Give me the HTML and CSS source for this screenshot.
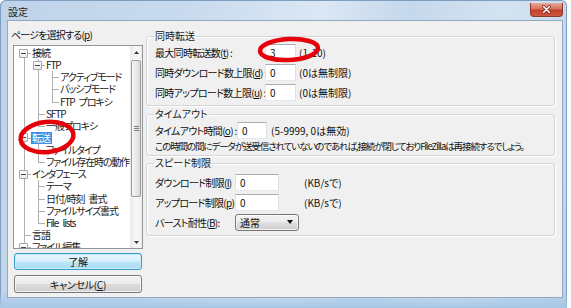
FILE: index.html
```html
<!DOCTYPE html>
<html lang="ja">
<head>
<meta charset="utf-8">
<title>設定</title>
<link rel="stylesheet" href="styles.css">
</head>
<body>
<div class="win">
  <div class="titlebar">
    <span class="title">設定</span>
    <span class="close"><svg width="11" height="9" viewBox="0 0 11 9"><path d="M2.5 1.5 L8.5 7.5 M8.5 1.5 L2.5 7.5" stroke="#7a2418" stroke-width="3" stroke-linecap="round"/><path d="M2.5 1.5 L8.5 7.5 M8.5 1.5 L2.5 7.5" stroke="#fff" stroke-width="1.5" stroke-linecap="round"/></svg></span>
  </div>
  <div class="frame">
    <div class="client">
      <div class="left">
        <div class="lbl">ページを選択する(<u>p</u>)</div>
        <div class="treebox">
          <div class="tree">
            <div class="r"><i class="c f"><b class="x"></b></i><span class="t">接続</span></div>
            <div class="r"><i class="c v"></i><i class="c tee"><b class="x"></b></i><span class="t">FTP</span></div>
            <div class="r"><i class="c v"></i><i class="c v"></i><i class="c tee"></i><span class="t">アクティブモード</span></div>
            <div class="r"><i class="c v"></i><i class="c v"></i><i class="c tee"></i><span class="t">パッシブモード</span></div>
            <div class="r"><i class="c v"></i><i class="c v"></i><i class="c l"></i><span class="t">FTP プロキシ</span></div>
            <div class="r"><i class="c v"></i><i class="c tee"></i><span class="t">SFTP</span></div>
            <div class="r"><i class="c v"></i><i class="c l"></i><span class="t">一般プロキシ</span></div>
            <div class="r"><i class="c tee"><b class="x"></b></i><span class="t sel">転送</span></div>
            <div class="r"><i class="c v"></i><i class="c tee"></i><span class="t">ファイルタイプ</span></div>
            <div class="r"><i class="c v"></i><i class="c l"></i><span class="t">ファイル存在時の動作</span></div>
            <div class="r"><i class="c tee"><b class="x"></b></i><span class="t">インタフェース</span></div>
            <div class="r"><i class="c v"></i><i class="c tee"></i><span class="t">テーマ</span></div>
            <div class="r"><i class="c v"></i><i class="c tee"></i><span class="t">日付/時刻 書式</span></div>
            <div class="r"><i class="c v"></i><i class="c tee"></i><span class="t">ファイルサイズ書式</span></div>
            <div class="r"><i class="c v"></i><i class="c l"></i><span class="t">File lists</span></div>
            <div class="r"><i class="c tee"></i><span class="t">言語</span></div>
            <div class="r"><i class="c tee"><b class="x"></b></i><span class="t">ファイル編集</span></div>
          </div>
          <div class="vs">
            <div class="arr"><svg width="5" height="3" viewBox="0 0 5 3"><path d="M0 3 L2.5 0 L5 3 Z" fill="#3a3a3a"/></svg></div>
            <div class="thumb"><span class="grip"></span></div>
            <div class="track"></div>
            <div class="arr"><svg width="5" height="3" viewBox="0 0 5 3"><path d="M0 0 L2.5 3 L5 0 Z" fill="#3a3a3a"/></svg></div>
          </div>
        </div>
        <button class="btn def" type="button">了解</button>
        <button class="btn" type="button">キャンセル(<u>C</u>)</button>
      </div>
      <div class="right">
        <fieldset class="grp g1">
          <legend>同時転送</legend>
          <div class="row"><span class="lab w1">最大同時転送数(<u>t</u>) :</span><input class="inp n1" type="text" value="3" readonly><span class="hint">(1-10)</span></div>
          <div class="row"><span class="lab w1">同時ダウンロード数上限(<u>d</u>) :</span><input class="inp n1" type="text" value="0" readonly><span class="hint">(0は無制限)</span></div>
          <div class="row"><span class="lab w1">同時アップロード数上限(<u>u</u>) :</span><input class="inp n1" type="text" value="0" readonly><span class="hint">(0は無制限)</span></div>
        </fieldset>
        <fieldset class="grp g2">
          <legend>タイムアウト</legend>
          <div class="row"><span class="lab w2">タイムアウト時間(<u>o</u>) :</span><input class="inp n2" type="text" value="0" readonly><span class="hint h2">(5-9999, 0は無効)</span></div>
          <div class="note">この時間の間にデータが送受信されていないのであれば,接続が閉じておりFileZillaは再接続するでしょう。</div>
        </fieldset>
        <fieldset class="grp g3">
          <legend>スピード制限</legend>
          <div class="row"><span class="lab w3">ダウンロード制限(<u>l</u>)</span><input class="inp n3" type="text" value="0" readonly><span class="hint h3">(KB/sで)</span></div>
          <div class="row"><span class="lab w3">アップロード制限(<u>p</u>):</span><input class="inp n3" type="text" value="0" readonly><span class="hint h3">(KB/sで)</span></div>
          <div class="row"><span class="lab w3">バースト耐性(<u>B</u>):</span><span class="combo"><span class="cv">通常</span><svg width="6" height="4" viewBox="0 0 6 4"><path d="M0 0 L6 0 L3 4 Z" fill="#111"/></svg></span></div>
        </fieldset>
      </div>
    </div>
  </div>
  <svg class="marks" width="571" height="308" viewBox="0 0 571 308">
    <ellipse cx="289" cy="49.5" rx="29" ry="10.5" transform="rotate(-3 289 49.5)" fill="none" stroke="#e5000a" stroke-width="4.5"/>
    <ellipse cx="47" cy="137" rx="26.5" ry="15" transform="rotate(-6 47 137)" fill="none" stroke="#e5000a" stroke-width="4.5"/>
  </svg>
</div>
</body>
</html>
```

FILE: styles.css
```css
* { box-sizing: border-box; }
html, body { margin: 0; padding: 0; }
body {
  width: 571px;
  height: 308px;
  overflow: hidden;
  background: #fbfcfd;
  font-family: "Noto Sans CJK JP", "Noto Sans", sans-serif;
  font-size: 10px;
  font-feature-settings: "palt";
  color: #111;
}
u { text-decoration: underline; text-underline-offset: 1px; }

.win {
  position: relative;
  width: 567px;
  height: 308px;
  display: flex;
  flex-direction: column;
  background:
    linear-gradient(100deg, #bed3ea 0%, #c8daee 30%, #dbe7f4 52%, #c5d8ec 66%, #d4e3f2 82%, #bcd1e9 100%);
  box-shadow: inset 0 0 0 1px #7f9dbd;
  border-radius: 6px 6px 0 0;
}

.titlebar {
  height: 20px;
  display: flex;
  align-items: flex-start;
  padding-left: 8px;
}
.title {
  margin-top: 6px;
  line-height: 12px;
  font-size: 10px;
  color: #1b1b1b;
}
.close {
  margin-left: auto;
  margin-right: 4px;
  margin-top: 3px;
  width: 33px;
  height: 14px;
  border: 1px solid #8a3a2c;
  border-top: none;
  border-radius: 0 0 4px 4px;
  background: linear-gradient(#e9aa9c 0%, #d8705d 45%, #c33f2b 55%, #d0563f 100%);
  display: flex;
  align-items: center;
  justify-content: center;
}

.frame {
  flex: 1;
  display: flex;
  padding: 0 4px 10px 7px;
  background: linear-gradient(to bottom, transparent 0, transparent 270px, #a7c7e6 288px, #6ea6d8 100%);
}
.client {
  flex: 1;
  display: flex;
  border: 1px solid #93a9c0;
  background: #f0f0f0;
  padding-left: 5px;
}

/* left column */
.left {
  width: 130px;
  padding-top: 8px;
  display: flex;
  flex-direction: column;
}
.lbl {
  height: 12px;
  line-height: 12px;
  margin-left: -2px;
  white-space: nowrap;
  letter-spacing: -0.8px;
}
.treebox {
  margin-top: 4px;
  height: 204px;
  border: 1px solid #8f959c;
  background: #fff;
  display: flex;
}
.tree {
  flex: 1;
  overflow: hidden;
  padding: 1px 0 0 3px;
  letter-spacing: -1.1px;
  word-spacing: 3px;
}
.r {
  height: 12.13px;
  display: flex;
  align-items: stretch;
  white-space: nowrap;
  line-height: 12.13px;
}
.c {
  flex: none;
  width: 14px;
  display: flex;
  align-items: center;
  justify-content: center;
  padding-right: 1px;
  background-repeat: no-repeat;
}
.c.v { background-image: linear-gradient(#b0b0b0, #b0b0b0); background-position: 7px 0; background-size: 1px 100%; }
.c.tee {
  background-image: linear-gradient(#b0b0b0, #b0b0b0), linear-gradient(#b0b0b0, #b0b0b0);
  background-position: 7px 0, 7px 6px;
  background-size: 1px 100%, 7px 1px;
}
.c.l {
  background-image: linear-gradient(#b0b0b0, #b0b0b0), linear-gradient(#b0b0b0, #b0b0b0);
  background-position: 7px 0, 7px 6px;
  background-size: 1px 7px, 7px 1px;
}
.c.f {
  background-image: linear-gradient(#b0b0b0, #b0b0b0), linear-gradient(#b0b0b0, #b0b0b0);
  background-position: 7px 6px, 7px 6px;
  background-size: 1px 100%, 7px 1px;
}
.x {
  width: 9px;
  height: 9px;
  border: 1px solid #a5a5a5;
  border-radius: 1px;
  background: linear-gradient(#444, #444) center / 5px 1px no-repeat, linear-gradient(#fff, #ececec);
}
.t {
  padding: 0 2px 0 1px;
  color: #1a1a1a;
}
.t.sel {
  background: #3c8fe3;
  color: #fff;
}

.vs {
  flex: none;
  width: 12px;
  display: flex;
  flex-direction: column;
  background: linear-gradient(to right, #e9e9e9, #f6f6f6 40%, #f6f6f6 70%, #ececec);
}
.arr {
  height: 12px;
  display: flex;
  align-items: center;
  justify-content: center;
}
.thumb {
  margin: 2px 1px 0;
  height: 137px;
  border: 1px solid #9c9c9c;
  border-radius: 2px;
  background: linear-gradient(to right, #f7f7f7, #e7e7e7 55%, #d9d9d9);
  display: flex;
  align-items: center;
  justify-content: center;
}
.grip {
  width: 5px;
  height: 5px;
  background: repeating-linear-gradient(#7d7d7d 0, #7d7d7d 1px, transparent 1px, transparent 2px);
}
.track { flex: 1; }

.btn {
  margin: 4px 1px 0;
  height: 17px;
  padding: 0;
  font: inherit;
  font-feature-settings: "palt";
  letter-spacing: -0.3px;
  color: #111;
  border: 1px solid #7a7a7a;
  border-radius: 3px;
  background: linear-gradient(#f3f3f3 0%, #ebebeb 48%, #dcdcdc 52%, #d0d0d0 100%);
  box-shadow: inset 0 0 0 1px rgba(255, 255, 255, 0.7);
  line-height: 15px;
}
.btn.def {
  border-color: #3a9bc8;
  background: linear-gradient(#e6f5fc 0%, #d9f0fb 48%, #bee6fa 52%, #a7d9f5 100%);
  box-shadow: inset 0 0 0 1px #c6edfb;
}
.btn + .btn { margin-top: 5px; height: 18px; }

/* right column */
.right {
  width: 409px;
  margin-left: 3px;
  padding-top: 9px;
  display: flex;
  flex-direction: column;
}
.grp {
  margin: 0;
  padding: 0 3px 3px 7px;
  border: 1px solid #d5d5d5;
  border-radius: 3px;
  box-shadow: inset 1px 1px 0 #fff, 1px 1px 0 #fff;
  min-width: 0;
}
.grp legend {
  padding: 0 1px;
  line-height: 12px;
  font-size: 10px;
  color: #1b1b1b;
}
.g2 { margin-top: 2px; }
.g3 { margin-top: 1px; padding-top: 3px; }
.row {
  height: 20px;
  display: flex;
  align-items: center;
  padding-left: 1px;
  white-space: nowrap;
}
.lab { flex: none; overflow: hidden; letter-spacing: -0.7px; }
.w1 { width: 110px; }
.w2 { width: 82px; }
.w3 { width: 80px; }
.inp {
  flex: none;
  height: 17px;
  border: 1px solid;
  border-color: #abadb3 #dbdfe6 #e3e9ef #e2e3ea;
  background: #fff;
  font: inherit;
  color: #111;
  padding: 0 0 0 4px;
  margin: 0;
  outline: none;
}
.n1 { width: 31px; }
.n2 { width: 30px; }
.n3 { width: 44px; }
.hint { margin-left: 3px; }
.hint.h2 { margin-left: 4px; }
.hint.h3 { margin-left: 25px; }
.note {
  height: 12px;
  line-height: 12px;
  padding-left: 1px;
  white-space: nowrap;
  font-size: 9.5px;
  letter-spacing: -1.1px;
}
.combo {
  width: 64px;
  height: 17px;
  border: 1px solid #777;
  border-radius: 3px;
  background: linear-gradient(#f2f2f2 0%, #ebebeb 48%, #dddddd 52%, #cfcfcf 100%);
  box-shadow: inset 0 0 0 1px rgba(255, 255, 255, 0.7);
  display: flex;
  align-items: center;
  padding: 0 5px 0 4px;
}
.cv { flex: 1; }

.marks {
  position: absolute;
  left: 0;
  top: 0;
  pointer-events: none;
}
```
